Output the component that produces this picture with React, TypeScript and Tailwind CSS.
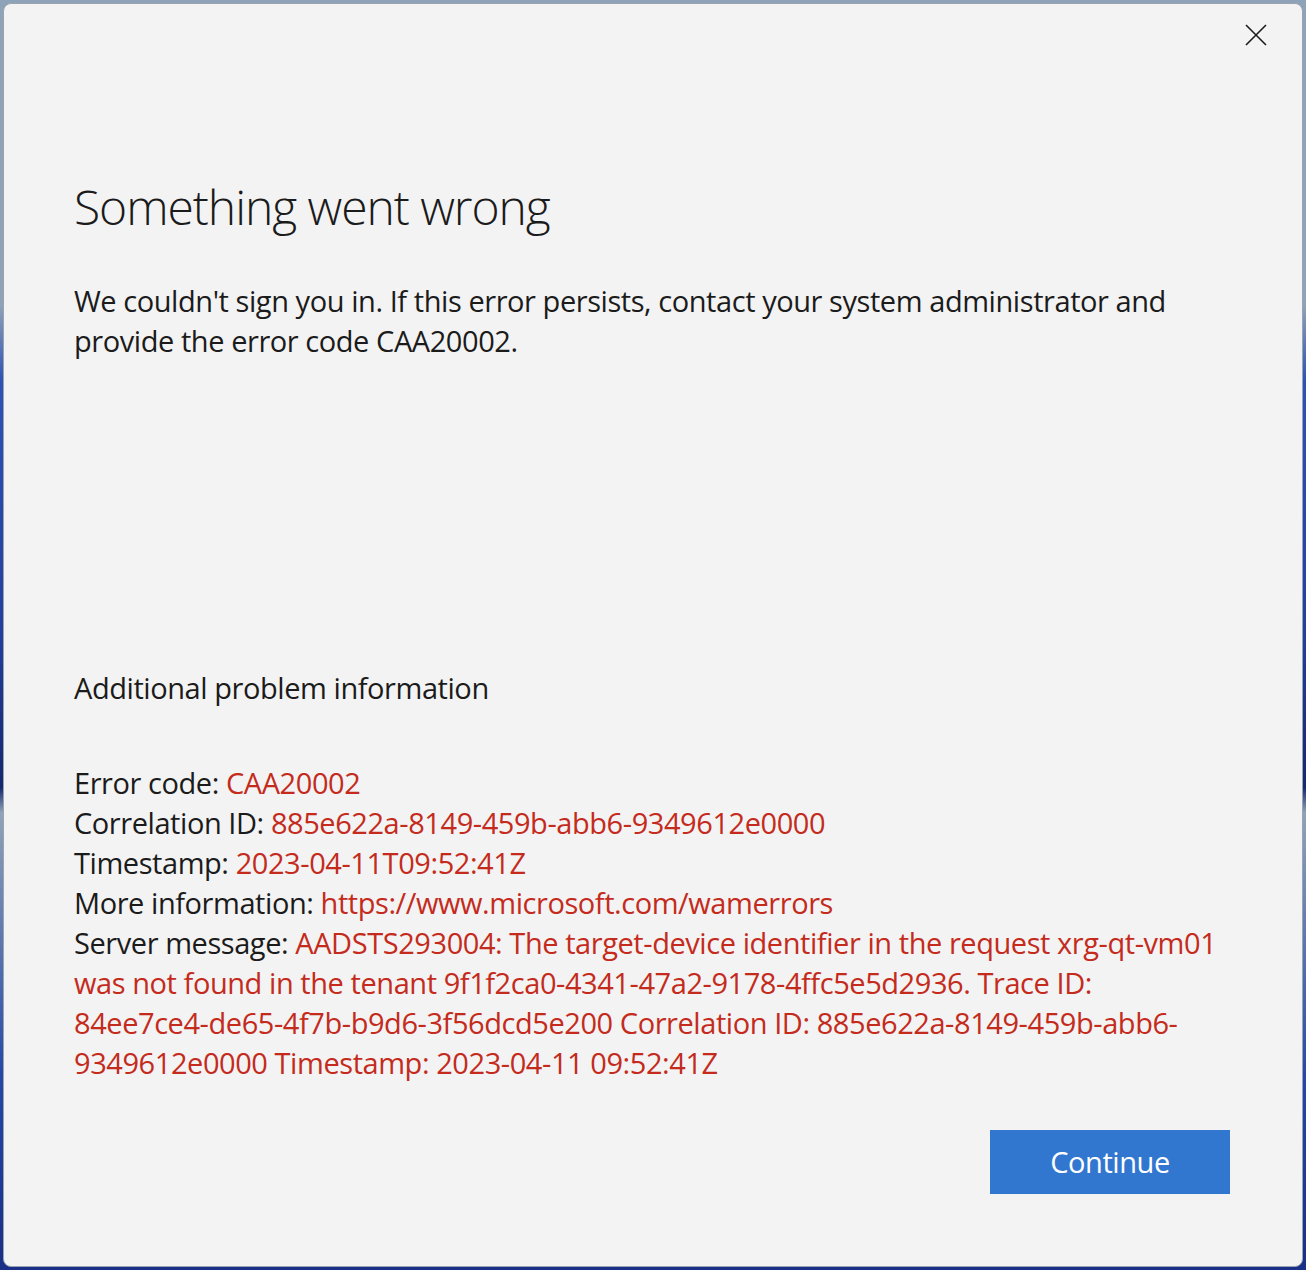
import React from "react";

const red = "text-[#c42b1c]";

export default function App() {
  return (
    <div className="h-[1270px] w-full bg-[linear-gradient(180deg,#8fa3b8_0%,#8fa3b8_24%,#2d52b6_30%,#233f9e_50%,#15286e_62%,#8fa3b8_64%,#2447a8_85%,#1a2f86_100%)] p-[3px]">
      <div
        className="flex h-full w-full flex-col rounded-[8px] border border-[#9aa4ae] bg-[#f3f3f3] text-[#1b1b1b]"
        style={{ fontFamily: '"Segoe UI", "Open Sans", "Noto Sans", sans-serif' }}
      >
        <div className="flex h-[61px] items-center justify-end pr-[23px]">
          <button className="flex h-[40px] w-[46px] items-center justify-center">
            <svg width="22" height="22" viewBox="0 0 22 22" fill="none" stroke="#1b1b1b" strokeWidth="1.6">
              <path d="M1 1 L21 21 M21 1 L1 21" />
            </svg>
          </button>
        </div>
        <div className="flex flex-1 flex-col pl-[70px] pr-[72px]">
          <h1 className="mt-[112px] text-[48px] font-[350] leading-[60px] tracking-[-0.022em]">Something went wrong</h1>
          <p className="mt-[44px] text-[29px] leading-[40px] tracking-[-0.015em]">
            We couldn't sign you in. If this error persists, contact your system administrator and
            <br />
            provide the error code CAA20002.
          </p>
          <h2 className="mt-[307px] text-[29px] font-normal leading-[40px] tracking-[-0.015em]">Additional problem information</h2>
          <div className="mt-[55px] text-[29px] leading-[40px] tracking-[-0.015em]">
            <div className="whitespace-nowrap">
              Error code: <span className={red}>CAA20002</span>
            </div>
            <div className="whitespace-nowrap">
              Correlation ID: <span className={red}>885e622a-8149-459b-abb6-9349612e0000</span>
            </div>
            <div className="whitespace-nowrap">
              Timestamp: <span className={red}>2023-04-11T09:52:41Z</span>
            </div>
            <div className="whitespace-nowrap">
              More information: <span className={red}>https://www.microsoft.com/wamerrors</span>
            </div>
            <div className="whitespace-nowrap">
              Server message: <span className={red}>AADSTS293004: The target-device identifier in the request xrg-qt-vm01</span>
            </div>
            <div className={`whitespace-nowrap ${red}`}>
              was not found in the tenant 9f1f2ca0-4341-47a2-9178-4ffc5e5d2936. Trace ID:
            </div>
            <div className={`whitespace-nowrap ${red}`}>
              84ee7ce4-de65-4f7b-b9d6-3f56dcd5e200 Correlation ID: 885e622a-8149-459b-abb6-
            </div>
            <div className={`whitespace-nowrap ${red}`}>9349612e0000 Timestamp: 2023-04-11 09:52:41Z</div>
          </div>
          <div className="mt-[47px] flex justify-end">
            <button className="h-[64px] w-[240px] bg-[#3277cf] text-[29px] leading-[40px] tracking-[-0.015em] text-white">
              Continue
            </button>
          </div>
        </div>
      </div>
    </div>
  );
}
